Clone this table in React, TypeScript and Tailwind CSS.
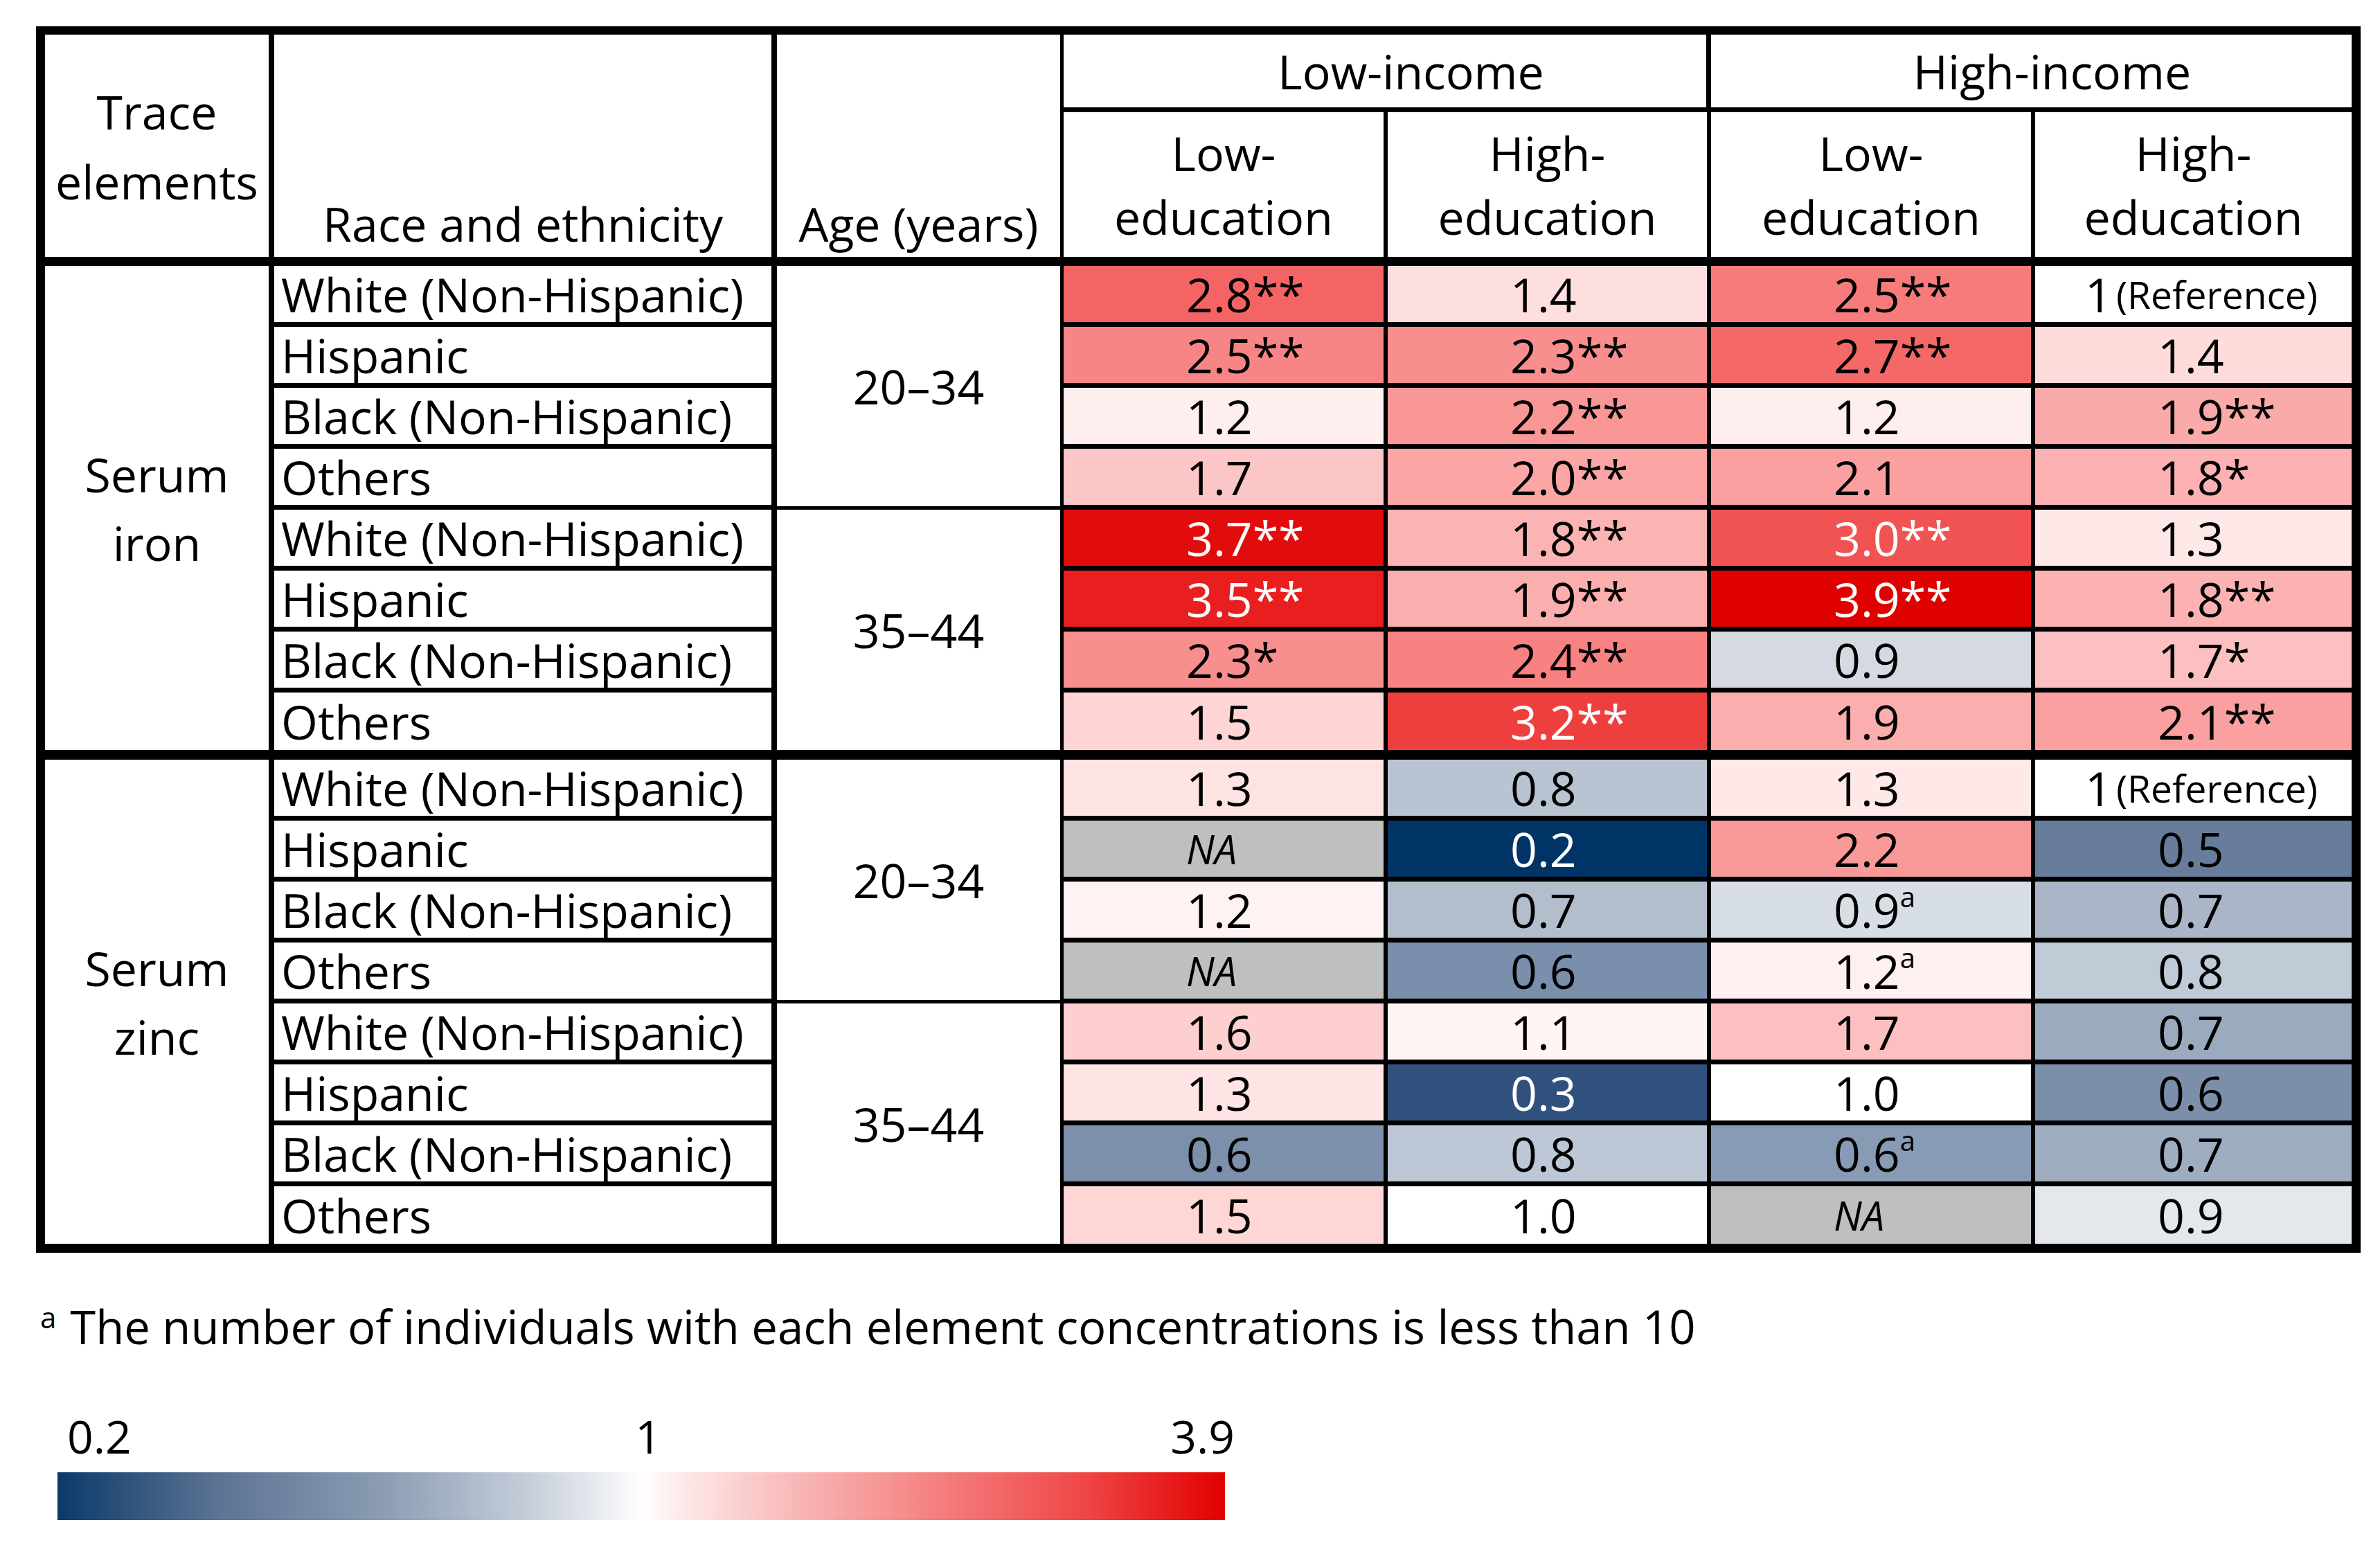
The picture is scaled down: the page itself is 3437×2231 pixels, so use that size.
import React from "react";

type Cell = { v: string; c: string; w?: boolean; sup?: boolean; na?: boolean; ref?: boolean };

const REF: Cell = { v: "1", c: "#FFFFFF", ref: true };

const iron: Cell[][] = [
  [{ v: "2.8**", c: "#F46464" }, { v: "1.4", c: "#FDDFE0" }, { v: "2.5**", c: "#F77B7B" }, REF],
  [{ v: "2.5**", c: "#F78585" }, { v: "2.3**", c: "#F98E8E" }, { v: "2.7**", c: "#F46868" }, { v: "1.4", c: "#FEDCDC" }],
  [{ v: "1.2", c: "#FEEEEE" }, { v: "2.2**", c: "#F99696" }, { v: "1.2", c: "#FEEEEE" }, { v: "1.9**", c: "#FBAAAA" }],
  [{ v: "1.7", c: "#FDC6C6" }, { v: "2.0**", c: "#FCA5A5" }, { v: "2.1", c: "#FBA0A0" }, { v: "1.8*", c: "#FCB2B2" }],
  [{ v: "3.7**", c: "#E30C0C", w: true }, { v: "1.8**", c: "#FCB3B3" }, { v: "3.0**", c: "#F15252", w: true }, { v: "1.3", c: "#FEE8E8" }],
  [{ v: "3.5**", c: "#E91F1F", w: true }, { v: "1.9**", c: "#FBAEAE" }, { v: "3.9**", c: "#DF0000", w: true }, { v: "1.8**", c: "#FCB2B2" }],
  [{ v: "2.3*", c: "#F98E8E" }, { v: "2.4**", c: "#F88282" }, { v: "0.9", c: "#D5DAE2" }, { v: "1.7*", c: "#FDC0C0" }],
  [{ v: "1.5", c: "#FED4D4" }, { v: "3.2**", c: "#EE3F3F", w: true }, { v: "1.9", c: "#FBAEAE" }, { v: "2.1**", c: "#FAA0A0" }],
];

const zinc: Cell[][] = [
  [{ v: "1.3", c: "#FEE3E3" }, { v: "0.8", c: "#B9C4D2" }, { v: "1.3", c: "#FEE8E8" }, REF],
  [{ v: "NA", c: "#BEC0BF", na: true }, { v: "0.2", c: "#003366", w: true }, { v: "2.2", c: "#FA9999" }, { v: "0.5", c: "#687D9B" }],
  [{ v: "1.2", c: "#FFF2F2" }, { v: "0.7", c: "#B3BECD" }, { v: "0.9", c: "#D8DEE6", sup: true }, { v: "0.7", c: "#AAB6C8" }],
  [{ v: "NA", c: "#BEC0BF", na: true }, { v: "0.6", c: "#7A8FAB" }, { v: "1.2", c: "#FEF0F0", sup: true }, { v: "0.8", c: "#C1CAD7" }],
  [{ v: "1.6", c: "#FECFCF" }, { v: "1.1", c: "#FFF5F5" }, { v: "1.7", c: "#FCC0C0" }, { v: "0.7", c: "#9AAABF" }],
  [{ v: "1.3", c: "#FEE4E4" }, { v: "0.3", c: "#30507E", w: true }, { v: "1.0", c: "#FFFFFF" }, { v: "0.6", c: "#7B8FAA" }],
  [{ v: "0.6", c: "#7C8FAB" }, { v: "0.8", c: "#BDC7D5" }, { v: "0.6", c: "#889BB5", sup: true }, { v: "0.7", c: "#9FADC1" }],
  [{ v: "1.5", c: "#FED6D6" }, { v: "1.0", c: "#FFFFFF" }, { v: "NA", c: "#BEC0BF", na: true }, { v: "0.9", c: "#E4E7EC" }],
];

const races = [
  "White (Non-Hispanic)",
  "Hispanic",
  "Black (Non-Hispanic)",
  "Others",
  "White (Non-Hispanic)",
  "Hispanic",
  "Black (Non-Hispanic)",
  "Others",
];

function DataCell({ cell, col, rowCls }: { cell: Cell; col: number; rowCls: string }) {
  const right = col < 3 ? "border-r-[6px]" : "";
  if (cell.ref) {
    return (
      <div className={`${rowCls} ${right} border-black flex items-center pl-[72px] text-black`} style={{ backgroundColor: cell.c }}>
        <span>1</span>
        <span className="ml-[6px] text-[55px]">(Reference)</span>
      </div>
    );
  }
  return (
    <div
      className={`${rowCls} ${right} border-black flex items-center pl-[177px] ${cell.w ? "text-white" : "text-black"}`}
      style={{ backgroundColor: cell.c }}
    >
      {cell.na ? (
        <span className="italic text-[58px]">NA</span>
      ) : (
        <span>
          {cell.v}
          {cell.sup ? <sup className="text-[40px] top-[-0.75em]">a</sup> : null}
        </span>
      )}
    </div>
  );
}

function Block({ name, rows, last }: { name: [string, string]; rows: Cell[][]; last: boolean }) {
  const out: React.ReactNode[] = [];
  out.push(
    <div
      key="trace"
      className={`row-span-8 border-r-[8px] border-black ${last ? "" : "border-b-[14px]"} flex flex-col items-center justify-center leading-[99px]`}
    >
      <span>{name[0]}</span>
      <span>{name[1]}</span>
    </div>
  );
  rows.forEach((r, i) => {
    const isLastRow = i === 7;
    let rowCls = "h-[88px] border-b-[7px]";
    if (isLastRow) rowCls = last ? "h-[83px]" : "h-[97px] border-b-[14px]";
    out.push(
      <div key={`race${i}`} className={`${rowCls} border-r-[8px] border-black flex items-center pl-[10px] whitespace-nowrap`}>
        {races[i]}
      </div>
    );
    if (i === 0 || i === 4) {
      const bottom = i === 0 ? "border-b-[5px]" : last ? "" : "border-b-[14px]";
      out.push(
        <div key={`age${i}`} className={`row-span-4 border-r-[5px] ${bottom} border-black flex items-center justify-center`}>
          {i === 0 ? "20–34" : "35–44"}
        </div>
      );
    }
    r.forEach((c, j) => {
      out.push(<DataCell key={`d${i}-${j}`} cell={c} col={j} rowCls={rowCls} />);
    });
  });
  return <>{out}</>;
}

export default function App() {
  return (
    <div className="w-[3437px] h-[2231px] bg-white pt-[38px] pl-[52px] font-['Open_Sans',sans-serif] text-[68px] text-black leading-none">
      <div className="w-[3357px] border-[13px] border-t-[12px] border-black grid grid-cols-[331px_726px_414px_468px_467px_468px_457px]">
        {/* Header */}
        <div className="row-span-2 border-r-[8px] border-b-[13px] border-black flex flex-col items-center justify-center leading-[101px]">
          <span>Trace</span>
          <span>elements</span>
        </div>
        <div className="row-span-2 border-r-[8px] border-b-[13px] border-black flex items-end justify-center leading-[96px]">
          <span>Race and ethnicity</span>
        </div>
        <div className="row-span-2 border-r-[5px] border-b-[13px] border-black flex items-end justify-center leading-[96px]">
          <span>Age (years)</span>
        </div>
        <div className="col-span-2 h-[112px] border-r-[7px] border-b-[7px] border-black flex items-center justify-center pl-[75px]">
          Low-income
        </div>
        <div className="col-span-2 h-[112px] border-b-[7px] border-black flex items-center justify-center pl-[60px]">
          High-income
        </div>
        <div className="h-[222px] border-r-[6px] border-b-[13px] border-black flex flex-col items-center justify-center leading-[92px]">
          <span>Low-</span>
          <span>education</span>
        </div>
        <div className="h-[222px] border-r-[6px] border-b-[13px] border-black flex flex-col items-center justify-center leading-[92px]">
          <span>High-</span>
          <span>education</span>
        </div>
        <div className="h-[222px] border-r-[6px] border-b-[13px] border-black flex flex-col items-center justify-center leading-[92px]">
          <span>Low-</span>
          <span>education</span>
        </div>
        <div className="h-[222px] border-b-[13px] border-black flex flex-col items-center justify-center leading-[92px]">
          <span>High-</span>
          <span>education</span>
        </div>

        <Block name={["Serum", "iron"]} rows={iron} last={false} />
        <Block name={["Serum", "zinc"]} rows={zinc} last={true} />
      </div>

      {/* Footnote */}
      <div className="mt-[66px] ml-[6px] text-[67px] leading-[80px] whitespace-nowrap">
        <sup className="text-[42px] top-[-0.55em]">a</sup>
        <span className="ml-[20px]">The number of individuals with each element concentrations is less than 10</span>
      </div>

      {/* Legend */}
      <div className="mt-[83px] ml-[31px] w-[1686px]">
        <div className="grid grid-cols-3 text-[66px] leading-[70px]">
          <span className="pl-[14px]">0.2</span>
          <span className="text-center pl-[20px]">1</span>
          <span className="text-right mr-[-14px]">3.9</span>
        </div>
        <div className="mt-[18px] h-[69px] w-[1686px] bg-[linear-gradient(to_right,#0B3A6A_0%,#5E7494_14%,#8C9DB4_28%,#C4CCD8_40%,#ECEEF2_47%,#FFFFFF_50%,#FDE6E6_54%,#F9B4B4_64%,#F47C7C_76%,#EF4646_88%,#E20000_100%)]" />
      </div>
    </div>
  );
}
